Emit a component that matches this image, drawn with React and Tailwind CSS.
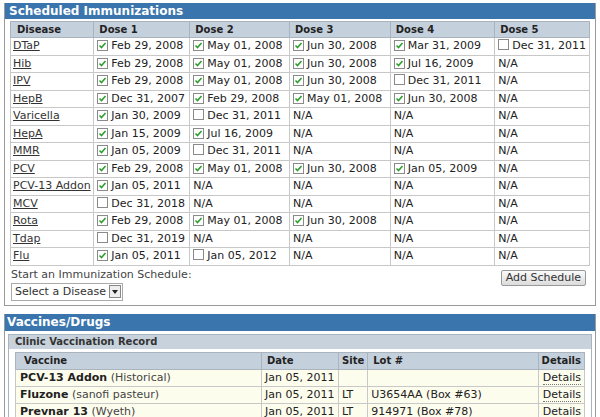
import React from 'react';

const rows = [
  ['DTaP', [[1, 'Feb 29, 2008'], [1, 'May 01, 2008'], [1, 'Jun 30, 2008'], [1, 'Mar 31, 2009'], [0, 'Dec 31, 2011']]],
  ['Hib', [[1, 'Feb 29, 2008'], [1, 'May 01, 2008'], [1, 'Jun 30, 2008'], [1, 'Jul 16, 2009'], null]],
  ['IPV', [[1, 'Feb 29, 2008'], [1, 'May 01, 2008'], [1, 'Jun 30, 2008'], [0, 'Dec 31, 2011'], null]],
  ['HepB', [[1, 'Dec 31, 2007'], [1, 'Feb 29, 2008'], [1, 'May 01, 2008'], [1, 'Jun 30, 2008'], null]],
  ['Varicella', [[1, 'Jan 30, 2009'], [0, 'Dec 31, 2011'], null, null, null]],
  ['HepA', [[1, 'Jan 15, 2009'], [1, 'Jul 16, 2009'], null, null, null]],
  ['MMR', [[1, 'Jan 05, 2009'], [0, 'Dec 31, 2011'], null, null, null]],
  ['PCV', [[1, 'Feb 29, 2008'], [1, 'May 01, 2008'], [1, 'Jun 30, 2008'], [1, 'Jan 05, 2009'], null]],
  ['PCV-13 Addon', [[1, 'Jan 05, 2011'], null, null, null, null]],
  ['MCV', [[0, 'Dec 31, 2018'], null, null, null, null]],
  ['Rota', [[1, 'Feb 29, 2008'], [1, 'May 01, 2008'], [1, 'Jun 30, 2008'], null, null]],
  ['Tdap', [[0, 'Dec 31, 2019'], null, null, null, null]],
  ['Flu', [[1, 'Jan 05, 2011'], [0, 'Jan 05, 2012'], null, null, null]],
];

const widths = ['w-[85px]', 'w-[96px]', 'w-[100px]', 'w-[101px]', 'w-[105px]', ''];

const Box = ({ on }) => (
  <span className="inline-flex w-[11px] h-[11px] border border-[#8a8a8a] bg-white mr-[3px] align-[-1px] items-center justify-center">
    {on ? (
      <svg width="9" height="9" viewBox="0 0 9 9"><path d="M1.5 4.5 L3.5 6.5 L7.5 2" stroke="#2ca02c" strokeWidth="1.6" fill="none" /></svg>
    ) : null}
  </span>
);

const vaccines = [
  ['PCV-13 Addon', '(Historical)', 'Jan 05, 2011', '', ''],
  ['Fluzone', '(sanofi pasteur)', 'Jan 05, 2011', 'LT', 'U3654AA (Box #63)'],
  ['Prevnar 13', '(Wyeth)', 'Jan 05, 2011', 'LT', '914971 (Box #78)'],
];

export default function App() {
  return (
    <div className="w-[600px] h-[417px] overflow-hidden bg-white pt-[3px] px-[4px] text-[11px] leading-[14px] text-[#222]" style={{ fontFamily: '"DejaVu Sans", Verdana, sans-serif' }}>
      <div className="border border-[#9a9a9a] border-t-0">
        <div className="bg-[#3a76ad] text-white font-bold text-[12px] h-[16px] leading-[16px] px-[4px]">Scheduled Immunizations</div>
        <div className="px-[5px] pt-[2px] pb-[4px]">
          <table className="w-full border-collapse">
            <thead>
              <tr className="bg-[#c4d0dc] h-[16px]">
                {['Disease', 'Dose 1', 'Dose 2', 'Dose 3', 'Dose 4', 'Dose 5'].map((h, i) => (
                  <th key={h} className={`${widths[i]} border border-[#a9b4bf] text-left font-bold text-[10px] leading-[13px] px-[5px] ${i === 0 ? 'pl-[6px]' : ''}`}>{h}</th>
                ))}
              </tr>
            </thead>
            <tbody>
              {rows.map(([name, doses]) => (
                <tr key={name} className="h-[17.5px]">
                  <td className="border border-[#c8c8c8] px-[2px] py-0"><span className="underline text-[#333]">{name}</span></td>
                  {doses.map((d, i) => (
                    <td key={i} className="border border-[#c8c8c8] px-[3px] py-0 whitespace-nowrap">
                      {d ? (<><Box on={d[0]} />{d[1]}</>) : 'N/A'}
                    </td>
                  ))}
                </tr>
              ))}
            </tbody>
          </table>
          <div className="flex justify-between items-start mt-[2px]">
            <div className="pl-[1px]">
              <div className="text-[#444]">Start an Immunization Schedule:</div>
              <div className="inline-flex items-center border border-[#aaa] mt-[1px] h-[18px] pl-[3px] pr-[1px] text-[#333]">
                Select a Disease
                <span className="ml-[3px] w-[12px] h-[13px] border border-[#888] bg-[#eee] flex items-center justify-center">
                  <svg width="6" height="4" viewBox="0 0 6 4"><path d="M0 0 L6 0 L3 4 Z" fill="#222" /></svg>
                </span>
              </div>
            </div>
            <button className="mr-[4px] mt-[2px] px-[4px] h-[16px] leading-[14px] border border-[#999] rounded-[2px] bg-gradient-to-b from-[#fafafa] to-[#dcdcdc] text-[#333]">Add Schedule</button>
          </div>
        </div>
      </div>

      <div className="mt-[8px] border border-[#9a9a9a] border-t-0">
        <div className="bg-[#3a76ad] text-white font-bold text-[12px] h-[17px] leading-[17px] px-[2px]">Vaccines/Drugs</div>
        <div className="px-[3px] pt-[3px]">
          <div className="border border-[#a9b4bf] bg-[#c8d2dc]">
            <div className="h-[14px] leading-[14px] px-[6px] font-bold text-[10px] text-[#333]">Clinic Vaccination Record</div>
            <div className="bg-white px-[6px] pt-[3px]">
              <table className="w-full border-collapse">
                <thead>
                  <tr className="bg-[#c4d0dc] h-[17px] text-[10px]">
                    <th className="w-[246px] border border-[#a9b4bf] text-left font-bold px-[8px]">Vaccine</th>
                    <th className="w-[77px] border border-[#a9b4bf] text-left font-bold px-[5px]">Date</th>
                    <th className="w-[24px] border border-[#a9b4bf] text-right font-bold px-[3px]">Site</th>
                    <th className="border border-[#a9b4bf] text-left font-bold px-[5px]">Lot #</th>
                    <th className="w-[45px] border border-[#a9b4bf] text-right font-bold px-[3px]">Details</th>
                  </tr>
                </thead>
                <tbody>
                  {vaccines.map(v => (
                    <tr key={v[0]} className="h-[17px] bg-[#fdfdee]">
                      <td className="border border-[#c8c8c8] px-[4px] whitespace-nowrap"><b>{v[0]}</b> <span className="text-[#444]">{v[1]}</span></td>
                      <td className="border border-[#c8c8c8] px-[3px] whitespace-nowrap">{v[2]}</td>
                      <td className="border border-[#c8c8c8] px-[3px]">{v[3]}</td>
                      <td className="border border-[#c8c8c8] px-[3px] whitespace-nowrap">{v[4]}</td>
                      <td className="border border-[#c8c8c8] px-[3px] text-right"><span className="border-b border-dotted border-[#777]">Details</span></td>
                    </tr>
                  ))}
                </tbody>
              </table>
            </div>
          </div>
        </div>
      </div>
    </div>
  );
}
